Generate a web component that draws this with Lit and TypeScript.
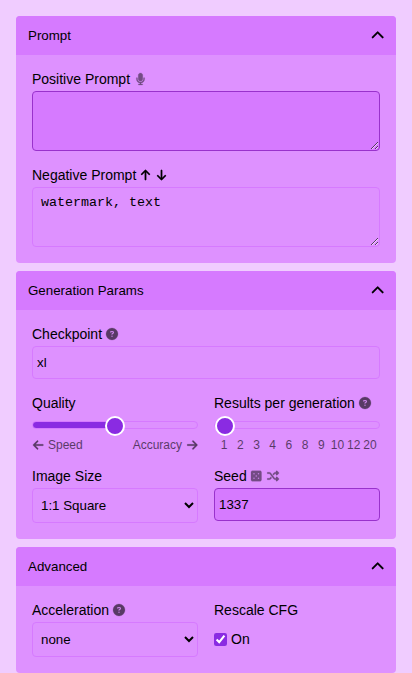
import { LitElement, html, svg, css } from "lit";
import { customElement, property, state } from "lit/decorators.js";
import { styleMap } from "lit/directives/style-map.js";

interface Glyph {
  width: number;
  path: string;
}

const dot = (x: number, y: number) => `M${x - 32} ${y}a32 32 0 1 0 64 0a32 32 0 1 0-64 0z`;

const GLYPHS: Record<string, Glyph> = {
  chevron: {
    width: 512,
    path: "M233.4 105.4c12.5-12.5 32.8-12.5 45.3 0l192 192c12.5 12.5 12.5 32.8 0 45.3s-32.8 12.5-45.3 0L256 173.3 86.6 342.6c-12.5 12.5-32.8 12.5-45.3 0s-12.5-32.8 0-45.3l192-192z",
  },
  microphone: {
    width: 384,
    path: "M192 0C139 0 96 43 96 96V256c0 53 43 96 96 96s96-43 96-96V96c0-53-43-96-96-96zM64 216c0-13.3-10.7-24-24-24s-24 10.7-24 24v40c0 89.1 66.2 162.7 152 174.4V464H120c-13.3 0-24 10.7-24 24s10.7 24 24 24h72 72c13.3 0 24-10.7 24-24s-10.7-24-24-24H216V430.4c85.8-11.7 152-85.3 152-174.4V216c0-13.3-10.7-24-24-24s-24 10.7-24 24v40c0 70.7-57.3 128-128 128s-128-57.3-128-128V216z",
  },
  question: {
    width: 512,
    path: "M256 512A256 256 0 1 0 256 0a256 256 0 1 0 0 512zM169.8 165.3c7.9-22.3 29.1-37.3 52.8-37.3h58.3c34.9 0 63.1 28.3 63.1 63.1c0 22.6-12.1 43.5-31.7 54.8L280 264.4c-.2 13-10.9 23.6-24 23.6c-13.3 0-24-10.7-24-24V250.5c0-8.6 4.6-16.5 12.1-20.8l44.3-25.4c4.7-2.7 7.6-7.7 7.6-13.1c0-8.4-6.8-15.1-15.1-15.1H222.6c-3.4 0-6.4 2.1-7.5 5.3l-.4 1.2c-4.4 12.5-18.2 19-30.6 14.6s-19-18.2-14.6-30.6l.4-1.2zM224 352a32 32 0 1 1 64 0 32 32 0 1 1 -64 0z",
  },
  up: {
    width: 384,
    path: "M214.6 41.4c-12.5-12.5-32.8-12.5-45.3 0l-160 160c-12.5 12.5-12.5 32.8 0 45.3s32.8 12.5 45.3 0L160 141.2V448c0 17.7 14.3 32 32 32s32-14.3 32-32V141.2L329.4 246.6c12.5 12.5 32.8 12.5 45.3 0s12.5-32.8 0-45.3l-160-160z",
  },
  down: {
    width: 384,
    path: "M169.4 470.6c12.5 12.5 32.8 12.5 45.3 0l160-160c12.5-12.5 12.5-32.8 0-45.3s-32.8-12.5-45.3 0L224 370.8V64c0-17.7-14.3-32-32-32s-32 14.3-32 32V370.7L54.6 265.4c-12.5-12.5-32.8-12.5-45.3 0s-12.5 32.8 0 45.3l160 160z",
  },
  left: {
    width: 448,
    path: "M9.4 233.4c-12.5 12.5-12.5 32.8 0 45.3l160 160c12.5 12.5 32.8 12.5 45.3 0s12.5-32.8 0-45.3L109.2 288 416 288c17.7 0 32-14.3 32-32s-14.3-32-32-32l-306.7 0L214.6 118.6c12.5-12.5 12.5-32.8 0-45.3s-32.8-12.5-45.3 0l-160 160z",
  },
  right: {
    width: 448,
    path: "M438.6 278.6c12.5-12.5 12.5-32.8 0-45.3l-160-160c-12.5-12.5-32.8-12.5-45.3 0s-12.5 32.8 0 45.3L338.8 224 32 224c-17.7 0-32 14.3-32 32s14.3 32 32 32l306.7 0L233.4 393.4c-12.5 12.5-12.5 32.8 0 45.3s32.8 12.5 45.3 0l160-160z",
  },
  dice: {
    width: 448,
    path:
      "M64 32C28.7 32 0 60.7 0 96V416c0 35.3 28.7 64 64 64H384c35.3 0 64-28.7 64-64V96c0-35.3-28.7-64-64-64H64z" +
      dot(128, 160) + dot(320, 160) + dot(224, 256) + dot(128, 352) + dot(320, 352),
  },
  shuffle: {
    width: 512,
    path: "M403.8 34.4c12-5 25.7-2.2 34.9 6.9l64 64c6 6 9.4 14.1 9.4 22.6s-3.4 16.6-9.4 22.6l-64 64c-9.2 9.2-22.9 11.9-34.9 6.9s-19.8-16.6-19.8-29.6V160H352c-10.1 0-19.6 4.7-25.6 12.8L284 229.3 244 176l31.2-41.6C293.3 110.2 321.8 96 352 96h32V64c0-12.9 7.8-24.6 19.8-29.6zM164 282.7L204 336l-31.2 41.6C154.7 401.8 126.2 416 96 416H32c-17.7 0-32-14.3-32-32s14.3-32 32-32H96c10.1 0 19.6-4.7 25.6-12.8L164 282.7zm274.6 188c-9.2 9.2-22.9 11.9-34.9 6.9s-19.8-16.6-19.8-29.6V416H352c-30.2 0-58.7-14.2-76.8-38.4L121.6 172.8c-6-8.1-15.5-12.8-25.6-12.8H32c-17.7 0-32-14.3-32-32s14.3-32 32-32H96c30.2 0 58.7 14.2 76.8 38.4L326.4 339.2c6 8.1 15.5 12.8 25.6 12.8h32V320c0-12.9 7.8-24.6 19.8-29.6s25.7-2.2 34.9 6.9l64 64c6 6 9.4 14.1 9.4 22.6s-3.4 16.6-9.4 22.6l-64 64z",
  },
};

@customElement("ui-icon")
export class UiIcon extends LitElement {
  @property() name = "chevron";

  static styles = css`
    :host {
      display: inline-flex;
      flex: none;
      height: 12px;
    }
    .glyph {
      display: block;
      height: 100%;
      overflow: visible;
      fill: currentColor;
      fill-rule: evenodd;
      stroke: currentColor;
      stroke-width: 10;
    }
  `;

  render() {
    const g = GLYPHS[this.name];
    return html`<svg class="glyph" viewBox="0 0 ${g.width} 512">${svg`<path d=${g.path}></path>`}</svg>`;
  }
}

@customElement("ui-panel")
export class UiPanel extends LitElement {
  @property() heading = "";
  @state() private open = true;

  static styles = css`
    :host {
      display: block;
      border-radius: 4px;
      overflow: hidden;
      background: #de91ff;
    }
    .header {
      display: flex;
      align-items: center;
      justify-content: space-between;
      box-sizing: border-box;
      width: 100%;
      height: 39px;
      padding: 0 12px;
      border: 0;
      background: #d67aff;
      color: #000;
      font: 13.333px "Liberation Sans", Arial, sans-serif;
    }
    .chevron {
      height: 13.333px;
      margin-top: 1px;
    }
    .body {
      display: flex;
      flex-direction: column;
      gap: 16px;
      padding: 16px;
    }
  `;

  render() {
    return html`
      <button class="header" @click=${() => (this.open = !this.open)}>
        <span>${this.heading}</span>
        <ui-icon class="chevron" name="chevron"></ui-icon>
      </button>
      ${this.open ? html`<div class="body"><slot></slot></div>` : null}
    `;
  }
}

@customElement("app-root")
export class AppRoot extends LitElement {
  @state() private quality = 50;
  @state() private results = 0;

  private counts = [1, 2, 3, 4, 6, 8, 9, 10, 12, 20];

  static styles = css`
    :host {
      display: flex;
      flex-direction: column;
      gap: 8px;
      box-sizing: border-box;
      height: 673px;
      padding: 16px 16px 0;
      background: #f0ccff;
      color: #000;
      font: 14px/16px "Liberation Sans", Arial, sans-serif;
    }
    .row {
      display: grid;
      grid-template-columns: 1fr 1fr;
      gap: 16px;
    }
    .field {
      display: flex;
      flex-direction: column;
      gap: 4px;
      min-width: 0;
    }
    .label {
      display: flex;
      align-items: center;
      height: 16px;
      gap: 4px;
      white-space: nowrap;
    }
    .mute {
      opacity: 0.6;
    }
    .action {
      margin-left: 0.75px;
      opacity: 0.48;
    }
    .mic {
      margin-left: 1.5px;
    }
    .arrow {
      margin: 0.5px 2px 0 1px;
    }
    .area,
    .input,
    .select {
      display: block;
      box-sizing: border-box;
      width: 100%;
      margin: 0;
      border: 1px solid #d67aff;
      border-radius: 4px;
      outline: 0;
      background: #de91ff;
      color: #000;
      font: 13.333px "Liberation Sans", Arial, sans-serif;
    }
    .area {
      height: 60px;
      padding: 7px 8px 8px;
      font-family: "Liberation Mono", monospace;
    }
    .input {
      height: 33px;
      padding: 4px;
    }
    .select {
      height: 35px;
      padding: 4px;
    }
    .changed {
      border-color: #9932cc;
      background: #d67aff;
    }
    .slider {
      appearance: none;
      display: block;
      box-sizing: border-box;
      width: 100%;
      height: 8px;
      margin: 6px 0 5px;
      border: 1px solid #d67aff;
      border-radius: 4px;
      outline: 0;
      background: #de91ff;
    }
    .slider::-webkit-slider-thumb {
      appearance: none;
      position: relative;
      top: 1px;
      box-sizing: border-box;
      width: 20px;
      height: 20px;
      border: 2px solid #fff;
      border-radius: 50%;
      background: #8a2be2;
    }
    .ends,
    .ticks {
      display: flex;
      height: 14px;
      font-size: 12px;
      line-height: 14px;
    }
    .ends {
      justify-content: space-between;
      padding: 0 0.75px;
    }
    .end {
      display: flex;
      align-items: center;
      gap: 4.75px;
    }
    .ticks {
      padding: 0 2px;
    }
    .tick {
      flex: 1 1 0;
      display: flex;
      justify-content: center;
      min-width: 0;
    }
    .check {
      display: flex;
      align-items: center;
      height: 35px;
      gap: 4px;
    }
    .on {
      margin-top: -1px;
    }
    .box {
      width: 13px;
      height: 13px;
      margin: 0;
      accent-color: #8a2be2;
    }
  `;

  private fill(percent: number) {
    return styleMap({
      backgroundImage: percent > 0 ? `linear-gradient(to right, #8a2be2 ${percent}%, transparent ${percent}%)` : "none",
    });
  }

  render() {
    return html`
      <ui-panel heading="Prompt">
        <div class="field">
          <div class="label">Positive Prompt<ui-icon class="action mic" name="microphone"></ui-icon></div>
          <textarea class="area changed"></textarea>
        </div>
        <div class="field">
          <div class="label">
            Negative Prompt<ui-icon class="arrow" name="up"></ui-icon><ui-icon class="arrow" name="down"></ui-icon>
          </div>
          <textarea class="area" .value=${"watermark, text"}></textarea>
        </div>
      </ui-panel>

      <ui-panel heading="Generation Params">
        <div class="field">
          <div class="label">Checkpoint<ui-icon class="mute" name="question"></ui-icon></div>
          <input class="input" value="xl" />
        </div>
        <div class="row">
          <div class="field">
            <div class="label">Quality</div>
            <input
              class="slider"
              type="range"
              .value=${String(this.quality)}
              style=${this.fill(this.quality)}
              @input=${(e: Event) => (this.quality = +(e.target as HTMLInputElement).value)}
            />
            <div class="ends mute">
              <span class="end"><ui-icon name="left"></ui-icon>Speed</span>
              <span class="end">Accuracy<ui-icon name="right"></ui-icon></span>
            </div>
          </div>
          <div class="field">
            <div class="label">Results per generation<ui-icon class="mute" name="question"></ui-icon></div>
            <input
              class="slider"
              type="range"
              min="0"
              max="9"
              .value=${String(this.results)}
              style=${this.fill((this.results / 9) * 100)}
              @input=${(e: Event) => (this.results = +(e.target as HTMLInputElement).value)}
            />
            <div class="ticks mute">${this.counts.map((n) => html`<span class="tick">${n}</span>`)}</div>
          </div>
        </div>
        <div class="row">
          <div class="field">
            <div class="label">Image Size</div>
            <select class="select"><option>1:1 Square</option></select>
          </div>
          <div class="field">
            <div class="label">
              Seed<ui-icon class="action" name="dice"></ui-icon><ui-icon class="action" name="shuffle"></ui-icon>
            </div>
            <input class="input changed" value="1337" />
          </div>
        </div>
      </ui-panel>

      <ui-panel heading="Advanced">
        <div class="row">
          <div class="field">
            <div class="label">Acceleration<ui-icon class="mute" name="question"></ui-icon></div>
            <select class="select"><option>none</option></select>
          </div>
          <div class="field">
            <div class="label">Rescale CFG</div>
            <label class="check"><input class="box" type="checkbox" checked /><span class="on">On</span></label>
          </div>
        </div>
      </ui-panel>
    `;
  }
}
